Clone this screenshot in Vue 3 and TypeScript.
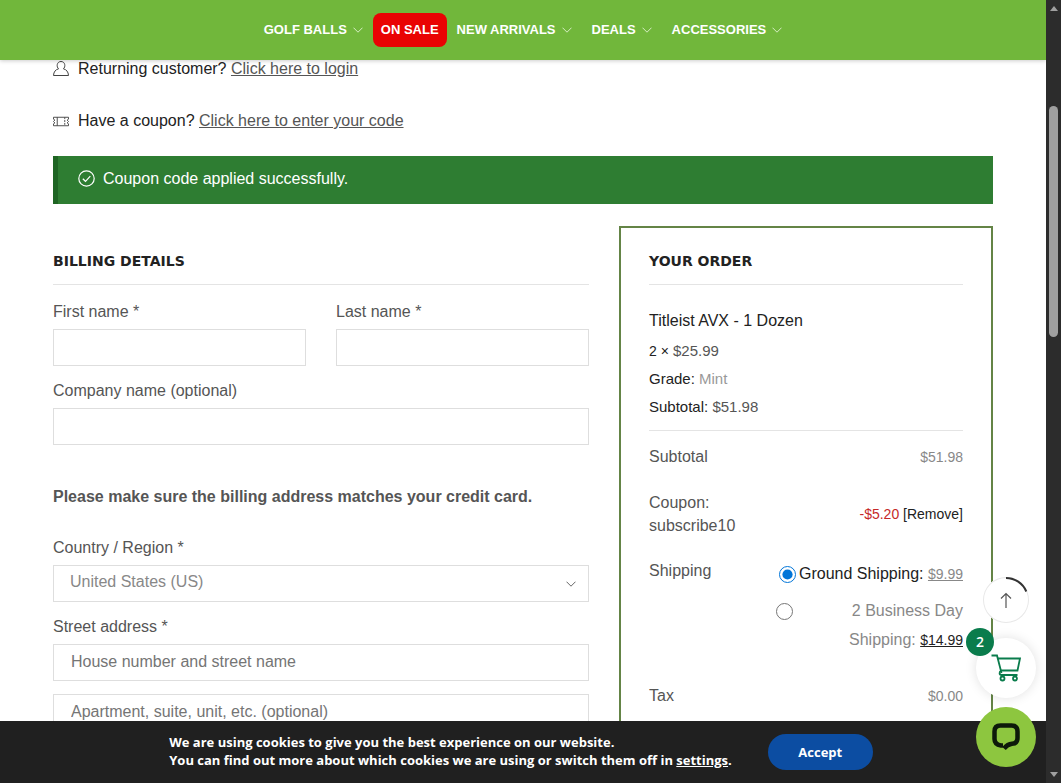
<script setup lang="ts">
import { ref } from 'vue'

interface NavItem {
  label: string
  sale?: boolean
}

const navItems: NavItem[] = [
  { label: 'Golf Balls' },
  { label: 'On Sale', sale: true },
  { label: 'New Arrivals' },
  { label: 'Deals' },
  { label: 'Accessories' },
]

const firstName = ref('')
const lastName = ref('')
const company = ref('')
const country = ref('US')
const street = ref('')
const apartment = ref('')
const shipping = ref('ground')
</script>

<template>
  <div class="shell">
    <div class="page">
      <header class="header">
        <nav class="nav">
          <a
            v-for="item in navItems"
            :key="item.label"
            href="#"
            class="nav-link"
            :class="{ sale: item.sale }"
          >
            {{ item.label }}
            <svg v-if="!item.sale" class="caret" viewBox="0 0 10 6" width="10" height="6" aria-hidden="true">
              <path d="M0.5 0.7 L5 5.2 L9.5 0.7" />
            </svg>
          </a>
        </nav>
      </header>

      <main class="content">
        <p class="notice">
          <svg class="notice-icon" viewBox="0 0 16 17" width="16" height="17" aria-hidden="true">
            <path d="M5.600 7.800 C3.200 6 3.700 0.500 8 0.500 C12.300 0.500 12.800 6 10.400 7.800 C13.500 8.600 15.300 10.800 15.500 14.500 H0.500 C0.700 10.800 2.500 8.600 5.600 7.800 Z" />
          </svg>
          <span>Returning customer? <a href="#">Click here to login</a></span>
        </p>
        <p class="notice">
          <svg class="notice-icon" viewBox="0 0 17 17" width="16" height="17" aria-hidden="true">
            <path d="M0.500 4 H16.500 V6 L15 7 L16.500 8.500 L15 10 L16.500 11 V13 H0.500 V11 L2 10 L0.500 8.500 L2 7 L0.500 6 Z" />
            <path d="M4.500 4 V13" />
            <path d="M12.500 4 V13" stroke-dasharray="2 1" />
          </svg>
          <span>Have a coupon? <a href="#">Click here to enter your code</a></span>
        </p>

        <div class="alert" role="alert">
          <svg viewBox="0 0 17 17" width="17" height="17" aria-hidden="true">
            <circle cx="8.500" cy="8.500" r="7.700" />
            <path d="M4.800 8.700 L7.500 11.300 L12.300 6.200" />
          </svg>
          <span>Coupon code applied successfully.</span>
        </div>

        <div class="columns">
          <form class="billing" @submit.prevent>
            <h3 class="heading">Billing details</h3>
            <div class="pair">
              <div class="field">
                <label for="first">First name *</label>
                <input id="first" v-model="firstName" type="text" />
              </div>
              <div class="field">
                <label for="last">Last name *</label>
                <input id="last" v-model="lastName" type="text" />
              </div>
            </div>
            <div class="field">
              <label for="company">Company name (optional)</label>
              <input id="company" v-model="company" type="text" />
            </div>
            <p class="reminder">Please make sure the billing address matches your credit card.</p>
            <div class="field">
              <label for="country">Country / Region *</label>
              <div class="select-wrap">
                <select id="country" v-model="country">
                  <option value="US">United States (US)</option>
                </select>
                <svg class="select-caret" viewBox="0 0 10 6" width="10" height="6" aria-hidden="true">
                  <path d="M0.500 0.700 L5 5.200 L9.500 0.700" />
                </svg>
              </div>
            </div>
            <div class="field">
              <label for="street">Street address *</label>
              <input id="street" v-model="street" type="text" placeholder="House number and street name" />
            </div>
            <div class="field">
              <input
                v-model="apartment"
                type="text"
                aria-label="Apartment, suite, unit, etc."
                placeholder="Apartment, suite, unit, etc. (optional)"
              />
            </div>
          </form>

          <section class="order">
            <h3 class="heading">Your order</h3>
            <div class="product">
              <p class="product-name">Titleist AVX - 1 Dozen</p>
              <p class="product-line"><small>2 ×</small> <span class="price">$25.99</span></p>
              <p class="product-line">Grade: <span class="muted">Mint</span></p>
              <p class="product-line">Subtotal: <span class="price">$51.98</span></p>
            </div>
            <table class="totals">
              <tbody>
                <tr>
                  <th scope="row">Subtotal</th>
                  <td>$51.98</td>
                </tr>
                <tr>
                  <th scope="row">Coupon: subscribe10</th>
                  <td class="middle"><span class="discount">-$5.20</span> <a href="#" class="remove">[Remove]</a></td>
                </tr>
                <tr class="shipping-row">
                  <th scope="row">Shipping</th>
                  <td>
                    <ul class="methods">
                      <li>
                        <input id="ground" v-model="shipping" type="radio" name="shipping" value="ground" />
                        <label for="ground" class="chosen">Ground Shipping: <u>$9.99</u></label>
                      </li>
                      <li class="wide">
                        <input id="twoday" v-model="shipping" type="radio" name="shipping" value="twoday" />
                        <label for="twoday"><span>2 Business Day</span> <span>Shipping:</span> <u>$14.99</u></label>
                      </li>
                    </ul>
                  </td>
                </tr>
                <tr>
                  <th scope="row">Tax</th>
                  <td>$0.00</td>
                </tr>
              </tbody>
            </table>
          </section>
        </div>
      </main>

      <aside class="cookies">
        <p>
          We are using cookies to give you the best experience on our website.<br />
          You can find out more about which cookies we are using or switch them off in <a href="#">settings</a>.
        </p>
        <button type="button">Accept</button>
      </aside>

      <div class="floating">
        <button type="button" class="to-top" aria-label="Back to top">
          <svg viewBox="0 0 46 46" width="46" height="46" aria-hidden="true">
            <path class="progress" d="M23 1 A22 22 0 0 1 43.300 14.500" />
            <path class="arrow" d="M23 31 V16.500 M18 21.500 L23 16.500 L28 21.500" />
          </svg>
        </button>
        <button type="button" class="cart" aria-label="Cart">
          <svg viewBox="0 0 30 28" width="30" height="28" aria-hidden="true">
            <path d="M0.500 1.500 H6 L10.500 19" />
            <path d="M7 4.500 H29 L26.500 16.500 H10" />
            <path d="M10.200 16.500 C8 17.500 8 21 10.500 21 H26.500" />
            <circle cx="11.500" cy="24.500" r="2" />
            <circle cx="24" cy="24.500" r="2" />
          </svg>
          <span class="badge">2</span>
        </button>
        <button type="button" class="chat" aria-label="Chat">
          <svg viewBox="0 0 28 28" width="28" height="28" aria-hidden="true">
            <path d="M11 22.500 H9 Q2.500 21.500 2.500 16 V8.500 Q2.500 2.500 8.500 2.500 H19.500 Q25.500 2.500 25.500 8.500 V15 Q25.500 20.500 20 20.800 Q15.500 21.200 12 25.500" />
          </svg>
        </button>
      </div>
    </div>

    <div class="scrollbar" aria-hidden="true">
      <svg viewBox="0 0 8 5" width="8" height="5"><path d="M0 5 L4 0 L8 5 Z" /></svg>
      <div class="track"><div class="thumb"></div></div>
      <svg viewBox="0 0 8 5" width="8" height="5"><path d="M0 0 L4 5 L8 0 Z" /></svg>
    </div>
  </div>
</template>

<style>
body {
  background: #fff;
}
</style>

<style scoped>
* {
  box-sizing: border-box;
}
.shell {
  display: flex;
  height: 100vh;
  overflow: hidden;
  font-family: 'Liberation Sans', Arial, sans-serif;
  font-size: 16px;
  line-height: 24px;
  color: #222;
}
.page {
  position: relative;
  flex: 1;
  min-width: 0;
  overflow: hidden;
}
p,
h3,
ul {
  margin: 0;
  padding: 0;
}
button,
input,
select {
  font: inherit;
}
button {
  border: 0;
  cursor: pointer;
}
svg {
  fill: none;
  flex: none;
}

.header {
  position: absolute;
  inset: 0 0 auto;
  z-index: 2;
  height: 60px;
  display: flex;
  align-items: center;
  justify-content: center;
  background: #71b73b;
  box-shadow: 0 1px 4px rgba(0, 0, 0, 0.2);
}
.nav {
  display: flex;
  align-items: center;
}
.nav-link {
  display: flex;
  align-items: center;
  gap: 6px;
  height: 34px;
  padding: 0 10px;
  color: #fff;
  font-size: 13px;
  font-weight: 700;
  text-decoration: none;
  text-transform: uppercase;
}
.nav-link.sale {
  padding: 0 8px;
  background: #e90303;
  border-radius: 8px;
}
.caret {
  stroke: #d5ecc2;
}

.content {
  max-width: 1046px;
  margin: 0 auto;
  padding: 57px 53px 0;
}
.notice {
  display: flex;
  align-items: center;
  gap: 9px;
  margin-bottom: 28px;
}
.notice a {
  color: #555;
}
.notice-icon {
  stroke: #444;
}
.alert {
  display: flex;
  align-items: center;
  gap: 8px;
  height: 48px;
  margin-top: -5px;
  padding: 0 20px 3px;
  border-left: 5px solid #1f6524;
  background: #2e7d32;
  color: #fff;
}
.alert svg {
  stroke: #fff;
  stroke-width: 1.200;
}

.columns {
  display: grid;
  grid-template-columns: 536fr 374fr;
  column-gap: 30px;
  margin-top: 22px;
}
.heading {
  padding-bottom: 11px;
  border-bottom: 1px solid #e4e4e4;
  font-family: 'DejaVu Sans', sans-serif;
  font-size: 14px;
  font-weight: 700;
  text-transform: uppercase;
}
.billing {
  padding-top: 23px;
  color: #555;
}
.billing .heading {
  margin-bottom: 15px;
  color: #222;
}
.pair {
  display: grid;
  grid-template-columns: 1fr 1fr;
  gap: 30px;
}
.field {
  display: flex;
  flex-direction: column;
  gap: 5px;
  margin-bottom: 13px;
}
.field input,
.field select {
  width: 100%;
  height: 37px;
  padding: 0 17px 1px;
  border: 1px solid #dedede;
  border-radius: 0;
  background: #fff;
  color: #888;
  outline: none;
}
.field input::placeholder {
  color: #757575;
  opacity: 1;
}
.select-wrap {
  position: relative;
}
.field select {
  display: block;
  appearance: none;
  padding: 0 16px 3px;
}
.select-caret {
  position: absolute;
  right: 13px;
  top: 16px;
  stroke: #666;
  pointer-events: none;
}
.reminder {
  margin: 40px 0 27px;
  font-weight: 700;
}

.order {
  padding: 21px 28px 0;
  border: 2px solid #648446;
}
.product {
  padding: 24px 0 9px;
  border-bottom: 1px solid #e4e4e4;
}
.product-name {
  margin-bottom: 4px;
}
.product-line {
  font-size: 15px;
  line-height: 28px;
}
.product-line small {
  font-size: 14px;
}
.price {
  color: #555;
}
.muted {
  color: #999;
}
.totals {
  width: 100%;
  margin-top: 3px;
  border-collapse: collapse;
}
.totals th,
.totals td {
  padding: 11px 0;
  vertical-align: baseline;
  line-height: 23px;
}
.totals th {
  width: 120px;
  padding-right: 24px;
  color: #555;
  font-weight: 400;
  text-align: left;
}
.totals td {
  color: #888;
  font-size: 14px;
  text-align: right;
}
.totals td.middle {
  vertical-align: middle;
}
.discount {
  color: #c62828;
}
.remove {
  color: #222;
  text-decoration: none;
}
.totals .shipping-row th,
.totals .shipping-row td {
  vertical-align: top;
}
.totals .shipping-row td {
  padding-bottom: 18px;
}
.methods {
  display: flex;
  flex-direction: column;
  gap: 7px;
  list-style: none;
  font-size: 16px;
  line-height: 29px;
}
.methods li {
  display: flex;
  justify-content: flex-end;
  gap: 3px;
}
.methods li.wide {
  justify-content: space-between;
}
.methods .wide label {
  width: 120px;
}
.methods input {
  width: 17px;
  height: 17px;
  margin: 7px 0 0;
  accent-color: #0075d8;
}
.methods .wide input {
  margin-left: 7px;
}
.methods u {
  font-size: 14px;
}
.chosen {
  color: #222;
}
.chosen u {
  color: #888;
}
.wide u {
  color: #222;
}

.cookies {
  position: absolute;
  inset: auto 0 0;
  z-index: 3;
  height: 62px;
  display: flex;
  align-items: center;
  justify-content: center;
  gap: 36px;
  padding-right: 4px;
  background: #202020;
  color: #fff;
  font-family: 'Open Sans', sans-serif;
  font-size: 13px;
  font-weight: 700;
  line-height: 18px;
}
.cookies p {
  padding-bottom: 2px;
}
.cookies a {
  color: #fff;
}
.cookies button {
  width: 105px;
  height: 36px;
  border-radius: 18px;
  background: #0c4da2;
  color: #fff;
}

.floating {
  position: absolute;
  right: 10px;
  bottom: 16px;
  z-index: 4;
  display: flex;
  flex-direction: column;
  align-items: center;
}
.floating button {
  display: grid;
  place-items: center;
  width: 60px;
  height: 60px;
  padding: 0;
  border-radius: 50%;
  background: #fff;
}
.floating .to-top {
  width: 46px;
  height: 46px;
  margin-bottom: 15px;
  box-shadow: inset 0 0 0 1px #e8e8e8;
}
.progress {
  stroke: #333;
  stroke-width: 2;
}
.arrow {
  stroke: #555;
  stroke-width: 1.200;
}
.floating .cart {
  position: relative;
  margin-bottom: 9px;
  box-shadow: 0 0 12px rgba(0, 0, 0, 0.12);
}
.cart svg {
  stroke: #0a7c4c;
  stroke-width: 1.800;
}
.badge {
  position: absolute;
  left: -10px;
  top: -10px;
  width: 28px;
  height: 28px;
  border-radius: 50%;
  background: #0a7c4c;
  color: #fff;
  font-family: 'Open Sans', sans-serif;
  font-size: 14px;
  font-weight: 600;
  line-height: 28px;
}
.floating .chat {
  background: #8dc63f;
}
.chat svg {
  stroke: #0d1a0a;
  stroke-width: 4.500;
}

.scrollbar {
  display: flex;
  flex-direction: column;
  align-items: center;
  width: 15px;
  padding: 6px 0;
  background: #2c2c2c;
}
.scrollbar svg {
  fill: #a0a0a0;
}
.track {
  flex: 1;
  width: 9px;
  padding-top: 95px;
}
.thumb {
  height: 231px;
  border-radius: 5px;
  background: #9f9f9f;
}
</style>
